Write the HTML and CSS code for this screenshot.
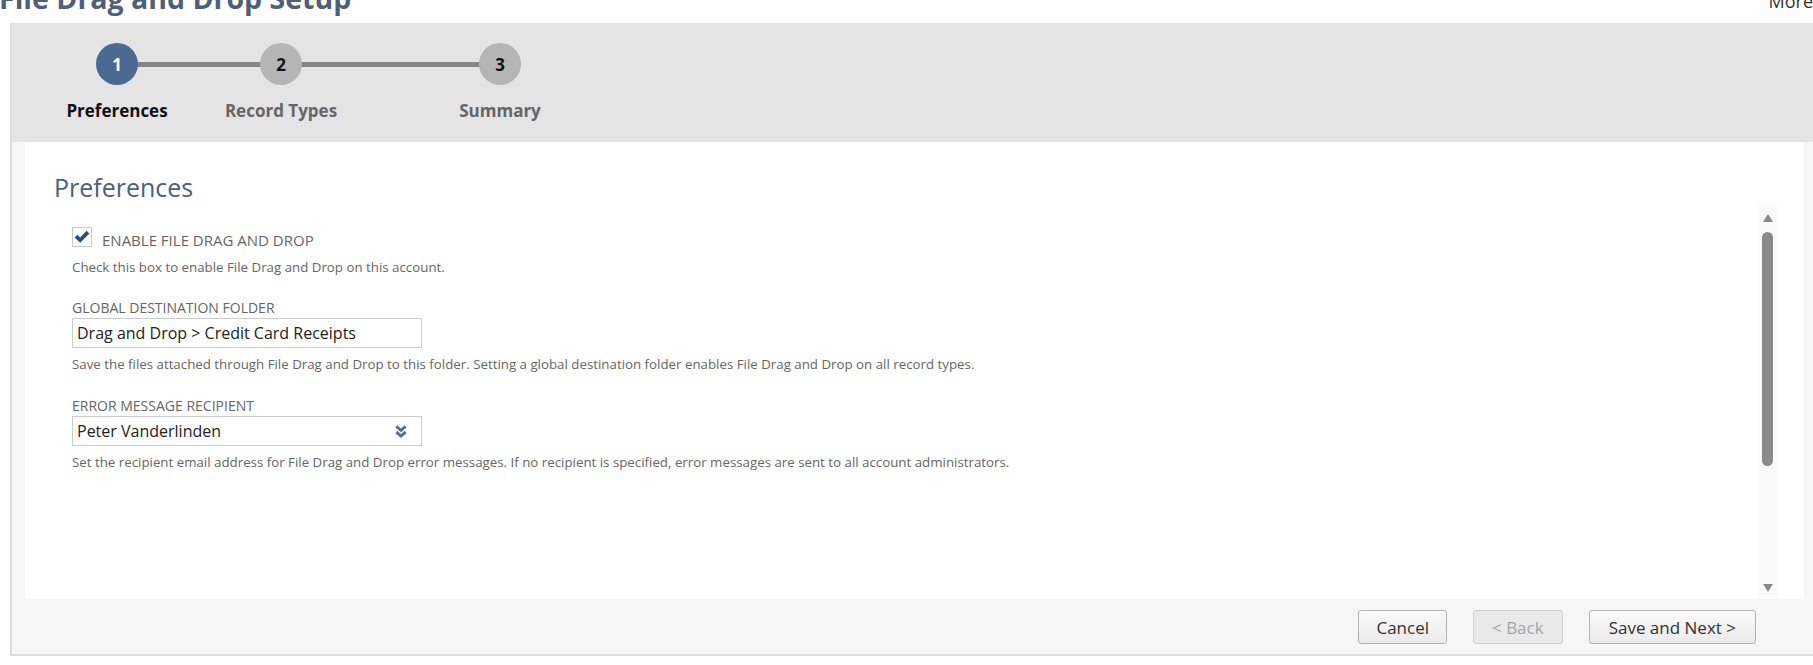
FILE: index.html
```html
<!DOCTYPE html>
<html lang="en">
<head>
<meta charset="utf-8">
<title>File Drag and Drop Setup</title>
<link rel="stylesheet" href="styles.css">
</head>
<body>
<div class="page">
  <div class="topbar">
    <h1 class="page-title">File Drag and Drop Setup</h1>
    <span class="more">More</span>
  </div>
  <div class="wizard">
    <div class="steps-bar">
      <div class="stepper">
        <div class="circle active">1</div>
        <div class="connector"></div>
        <div class="circle">2</div>
        <div class="connector"></div>
        <div class="circle">3</div>
        <div class="step-label current">Preferences</div>
        <div class="step-label">Record Types</div>
        <div class="step-label">Summary</div>
      </div>
    </div>
    <div class="wizard-body">
      <div class="card">
        <h2 class="card-title">Preferences</h2>
        <div class="scroll">
          <div class="scroll-content">
            <div class="check-row">
              <span class="checkbox">
                <svg width="16" height="14" viewBox="0 0 16 14"><path d="M0.6 7.4 L3.3 4.7 L6.2 7.6 L12.6 0.8 L15.4 3.6 L6.2 12.8 Z" fill="#284f86"/></svg>
              </span>
              <span class="check-label">ENABLE FILE DRAG AND DROP</span>
            </div>
            <p class="help help-first">Check this box to enable File Drag and Drop on this account.</p>

            <div class="field">
              <div class="field-label">GLOBAL DESTINATION FOLDER</div>
              <div class="input">Drag and Drop &gt; Credit Card Receipts</div>
              <p class="help">Save the files attached through File Drag and Drop to this folder. Setting a global destination folder enables File Drag and Drop on all record types.</p>
            </div>

            <div class="field">
              <div class="field-label">ERROR MESSAGE RECIPIENT</div>
              <div class="input select">
                <span>Peter Vanderlinden</span>
                <svg class="chev" width="12" height="13" viewBox="0 0 12 13"><path d="M1.3 1.4 L6 5.4 L10.7 1.4" fill="none" stroke="#5a7191" stroke-width="3"/><path d="M1.3 7 L6 11 L10.7 7" fill="none" stroke="#5a7191" stroke-width="3"/></svg>
              </div>
              <p class="help">Set the recipient email address for File Drag and Drop error messages. If no recipient is specified, error messages are sent to all account administrators.</p>
            </div>
          </div>
          <div class="scrollbar">
            <span class="arrow up"></span>
            <span class="thumb"></span>
            <span class="spacer"></span>
            <span class="arrow down"></span>
          </div>
        </div>
      </div>
      <div class="actions">
        <button class="btn btn-cancel">Cancel</button>
        <button class="btn disabled">&lt; Back</button>
        <button class="btn btn-next">Save and Next &gt;</button>
      </div>
    </div>
  </div>
</div>
</body>
</html>
```

FILE: styles.css
```css
html, body {
  margin: 0;
  padding: 0;
  background: #ffffff;
  overflow: hidden;
}
body {
  font-family: "Open Sans", "Liberation Sans", sans-serif;
  color: #333;
}
.page {
  width: 1819px;
}
.topbar {
  height: 23px;
  display: flex;
  justify-content: space-between;
  align-items: flex-start;
}
.page-title {
  margin: -16px 0 0 -1px;
  font-size: 28.5px;
  line-height: 28px;
  font-weight: 700;
  color: #4d5f79;
}
.more {
  margin-top: -8px;
  margin-right: 6px;
  font-size: 18px;
  line-height: 18px;
  color: #333;
}
.wizard {
  margin-left: 10px;
  border-left: 2px solid #dcdcdc;
  border-bottom: 2px solid #dcdcdc;
  background: #f6f6f6;
}
.steps-bar {
  background: #e4e4e4;
  height: 119px;
  padding: 20px 0 0 84px;
  box-sizing: border-box;
}
.stepper {
  display: grid;
  grid-template-columns: 42px 122px 42px 177px 42px;
  grid-template-rows: 42px auto;
  row-gap: 14px;
}
.circle {
  width: 42px;
  height: 42px;
  border-radius: 50%;
  background: #b5b5b5;
  color: #111;
  font-weight: 700;
  font-size: 17px;
  display: flex;
  align-items: center;
  justify-content: center;
  position: relative;
  z-index: 1;
}
.circle.active {
  background: #4b6a92;
  color: #fff;
}
.connector {
  align-self: center;
  height: 5px;
  background: #878787;
  margin: 0 -2px;
}
.step-label {
  grid-row: 2;
  width: 200px;
  margin: 0 -79px;
  text-align: center;
  font-size: 17px;
  line-height: 23px;
  font-weight: 700;
  color: #666;
  white-space: nowrap;
}
.step-label:nth-child(6) { grid-column: 1; }
.step-label:nth-child(7) { grid-column: 3; }
.step-label:nth-child(8) { grid-column: 5; }
.step-label.current {
  color: #111;
}
.wizard-body {
  padding: 0 15px 0 13px;
}
.card {
  background: #fff;
  height: 457px;
  padding: 28px 27px 0 29px;
  box-sizing: border-box;
  display: flex;
  flex-direction: column;
}
.card-title {
  margin: 0;
  font-size: 25px;
  line-height: 34px;
  font-weight: 400;
  color: #4d5f79;
}
.scroll {
  flex: 1;
  display: flex;
  min-height: 0;
}
.scroll-content {
  flex: 1;
  padding: 23px 0 0 18px;
}
.check-row {
  display: flex;
  align-items: flex-start;
  height: 23px;
}
.checkbox {
  width: 18px;
  height: 18px;
  border: 1px solid #c9c9c9;
  background: #fff;
  display: flex;
  align-items: center;
  justify-content: center;
}
.check-label {
  margin: 3px 0 0 10px;
  font-size: 15px;
  line-height: 20px;
  color: #666;
}
.help {
  margin: 7px 0 0;
  font-size: 13.3px;
  line-height: 18px;
  color: #666;
}
.help-first {
  margin-top: 8px;
}
.field {
  margin-top: 23px;
}
.field + .field {
  margin-top: 24px;
}
.field-label {
  font-size: 14px;
  line-height: 18px;
  color: #666;
  margin-bottom: 1px;
}
.input {
  width: 350px;
  height: 30px;
  box-sizing: border-box;
  border: 1px solid #cccccc;
  padding: 0 14px 0 4px;
  font-size: 16px;
  line-height: 28px;
  color: #222;
  display: flex;
  align-items: center;
  justify-content: space-between;
}
.scrollbar {
  width: 19px;
  background: #fafafa;
  display: flex;
  flex-direction: column;
  align-items: center;
  padding: 10px 0 7px;
  box-sizing: border-box;
}
.arrow {
  width: 0;
  height: 0;
  border-left: 5.5px solid transparent;
  border-right: 5.5px solid transparent;
}
.arrow.up {
  border-bottom: 8px solid #8a8a8a;
}
.arrow.down {
  border-top: 8px solid #8a8a8a;
}
.thumb {
  width: 11px;
  height: 234px;
  margin-top: 10px;
  border-radius: 6px;
  background: #8a8a8a;
}
.spacer {
  flex: 1;
}
.actions {
  height: 55px;
  display: flex;
  justify-content: flex-end;
  align-items: flex-start;
  gap: 26px;
  padding: 11px 48px 0 0;
  box-sizing: border-box;
}
.btn {
  height: 34px;
  padding: 0 18px;
  font-family: "Open Sans", "Liberation Sans", sans-serif;
  font-size: 17px;
  color: #333;
  background: linear-gradient(#f9f9f9, #ebebeb);
  border: 1px solid #b3b3b3;
  border-radius: 3px;
}
.btn-cancel {
  padding: 0 17px;
}
.btn-next {
  padding: 0 19px;
}
.btn.disabled {
  background: #e9e9e9;
  border-color: #cfcfcf;
  color: #a5a5a5;
}
```
